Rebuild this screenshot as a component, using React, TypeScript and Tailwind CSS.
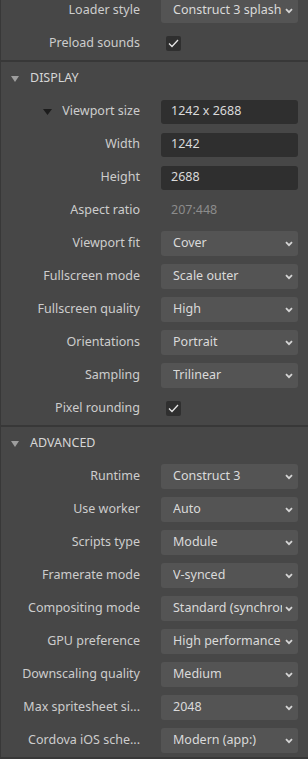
import React from "react";

type Prop =
  | { kind: "select"; label: string; value: string }
  | { kind: "input"; label: string; value: string; toggle?: boolean }
  | { kind: "check"; label: string }
  | { kind: "text"; label: string; value: string };

const general: Prop[] = [
  { kind: "select", label: "Loader style", value: "Construct 3 splash" },
  { kind: "check", label: "Preload sounds" },
];

const display: Prop[] = [
  { kind: "input", label: "Viewport size", value: "1242 x 2688", toggle: true },
  { kind: "input", label: "Width", value: "1242" },
  { kind: "input", label: "Height", value: "2688" },
  { kind: "text", label: "Aspect ratio", value: "207:448" },
  { kind: "select", label: "Viewport fit", value: "Cover" },
  { kind: "select", label: "Fullscreen mode", value: "Scale outer" },
  { kind: "select", label: "Fullscreen quality", value: "High" },
  { kind: "select", label: "Orientations", value: "Portrait" },
  { kind: "select", label: "Sampling", value: "Trilinear" },
  { kind: "check", label: "Pixel rounding" },
];

const advanced: Prop[] = [
  { kind: "select", label: "Runtime", value: "Construct 3" },
  { kind: "select", label: "Use worker", value: "Auto" },
  { kind: "select", label: "Scripts type", value: "Module" },
  { kind: "select", label: "Framerate mode", value: "V-synced" },
  { kind: "select", label: "Compositing mode", value: "Standard (synchronous)" },
  { kind: "select", label: "GPU preference", value: "High performance" },
  { kind: "select", label: "Downscaling quality", value: "Medium" },
  { kind: "select", label: "Max spritesheet si...", value: "2048" },
  { kind: "select", label: "Cordova iOS sche...", value: "Modern (app:)" },
];

const Chevron = () => (
  <svg width="8" height="6" viewBox="0 0 8 6" className="shrink-0">
    <path d="M1 1.2 L4 4.2 L7 1.2" fill="none" stroke="#d4d4d4" strokeWidth="1.8" />
  </svg>
);

const Row = ({ p }: { p: Prop }) => {
  return (
    <div className="flex items-center h-[33px]">
      <div className="w-[139px] shrink-0 flex justify-end items-center gap-[10px] text-[#cdcdcd] whitespace-nowrap">
        {p.kind === "input" && p.toggle && (
          <svg width="9" height="6" viewBox="0 0 9 6">
            <path d="M0 0 H9 L4.5 6 Z" fill="#1c1c1c" />
          </svg>
        )}
        <span>{p.label}</span>
      </div>
      <div className="ml-[21px] w-[137px] shrink-0">
        {p.kind === "select" && (
          <div className="h-[25px] rounded-[3px] bg-[#545454] flex items-center pl-[12px] pr-[5px] gap-[3px] text-[#dadada]">
            <span className="flex-1 overflow-hidden whitespace-nowrap">{p.value}</span>
            <Chevron />
          </div>
        )}
        {p.kind === "input" && (
          <div className="h-[24px] rounded-[3px] bg-[#2f2f2f] flex items-center pl-[10px] text-[#dadada]">
            {p.value}
          </div>
        )}
        {p.kind === "text" && <div className="pl-[10px] text-[#8c8c8c]">{p.value}</div>}
        {p.kind === "check" && (
          <div className="ml-[5px] w-[15px] h-[15px] rounded-[2px] bg-[#2f2f2f] flex items-center justify-center">
            <svg width="11" height="9" viewBox="0 0 11 9">
              <path d="M1 4.5 L4 7.5 L10 1" fill="none" stroke="#e6e6e6" strokeWidth="1.3" />
            </svg>
          </div>
        )}
      </div>
    </div>
  );
};

const Header = ({ title }: { title: string }) => (
  <div className="flex items-center h-[33px] pl-[10px] gap-[11px] text-[#d6d6d6]">
    <svg width="8" height="6" viewBox="0 0 8 6">
      <path d="M0 0 H8 L4 6 Z" fill="#9e9e9e" />
    </svg>
    <span>{title}</span>
  </div>
);

const Separator = () => <div className="h-[2px] bg-[#383838]" />;

export default function App() {
  return (
    <div
      className="w-[308px] h-[759px] overflow-hidden bg-[#474747] border-l border-[#383838] text-[12.5px]"
      style={{ fontFamily: '"Noto Sans", "Open Sans", sans-serif' }}
    >
      <div className="-mt-[6px]">
        {general.map((p) => (
          <Row key={p.label} p={p} />
        ))}
        <Separator />
        <Header title="DISPLAY" />
        {display.map((p) => (
          <Row key={p.label} p={p} />
        ))}
        <Separator />
        <Header title="ADVANCED" />
        {advanced.map((p) => (
          <Row key={p.label} p={p} />
        ))}
        <Separator />
      </div>
    </div>
  );
}
